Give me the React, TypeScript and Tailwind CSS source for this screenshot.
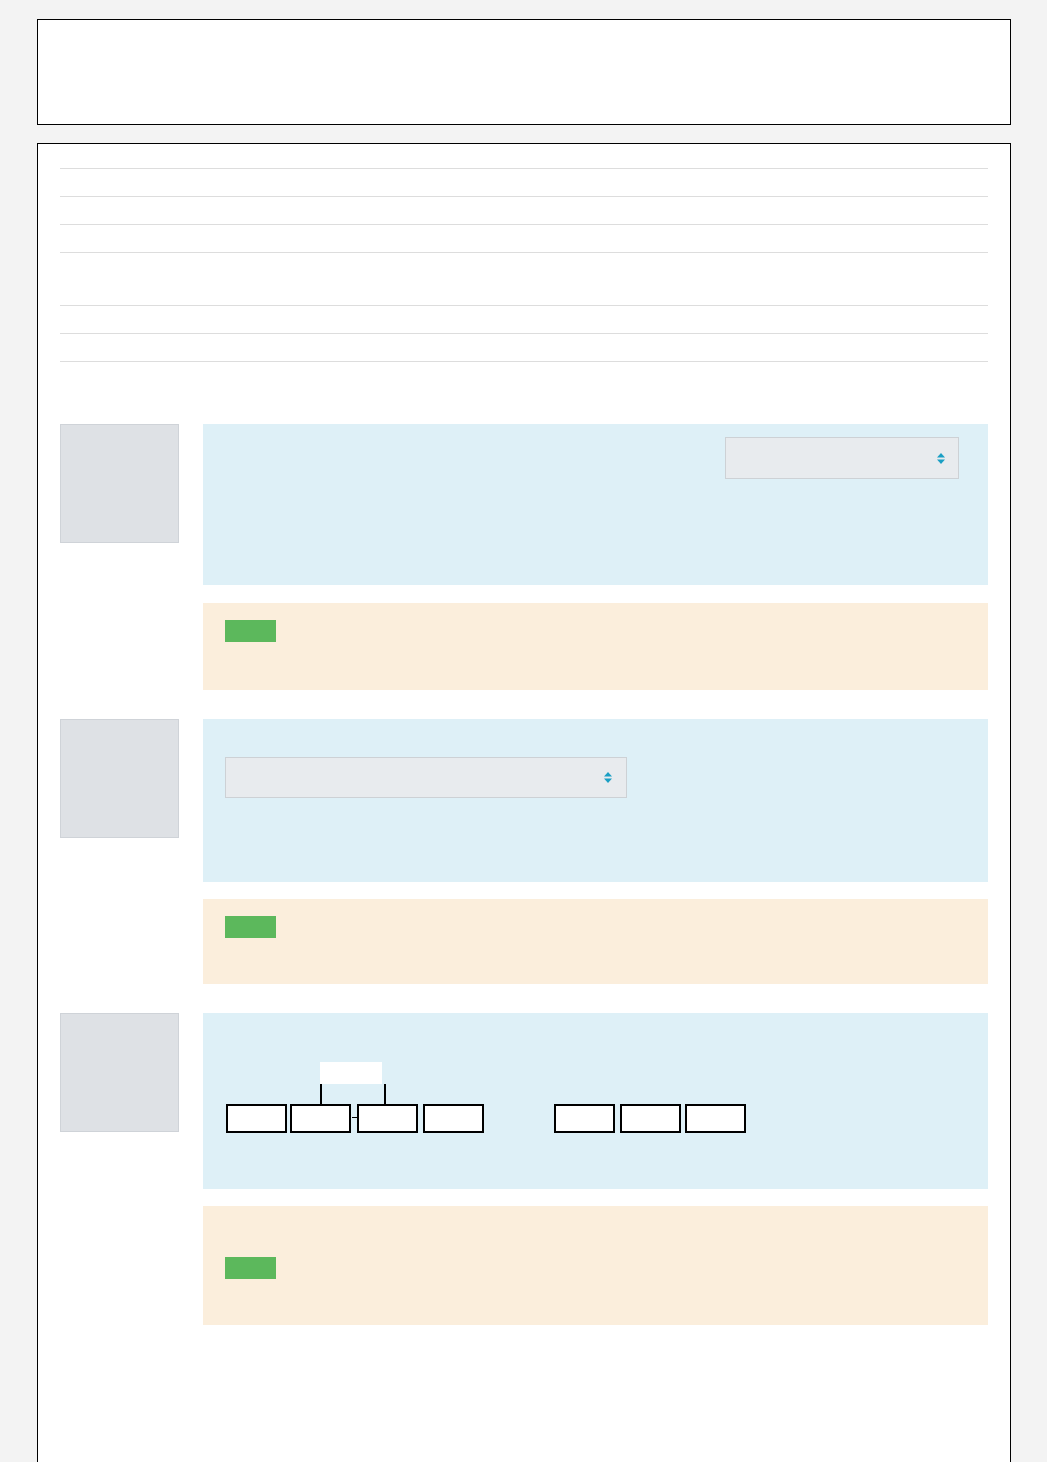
import React from "react";

function SelectArrow() {
  return (
    <svg width="8" height="11" viewBox="0 0 8 11" className="shrink-0">
      <path d="M4 0 L8 4.5 L0 4.5 Z" fill="#1a9fc4" />
      <path d="M4 11 L8 6.5 L0 6.5 Z" fill="#1a9fc4" />
    </svg>
  );
}

function GreyBox() {
  return <div className="w-[119px] h-[119px] bg-[#dee1e5] border border-[#cfd3d8]" />;
}

function Badge() {
  return <div className="w-[51px] h-[22px] bg-[#5cb85c]" />;
}

function OrgBox({ className = "" }: { className?: string }) {
  return <div className={"w-[61px] h-[29px] bg-white border-2 border-black " + className} />;
}

export default function App() {
  return (
    <div className="min-h-[1462px] bg-[#f3f3f3] pt-[19px] font-['Liberation_Sans',sans-serif]">
      <div className="w-[974px] mx-auto">
        <div className="h-[106px] bg-white border border-black" />
        <div className="mt-[18px] bg-white border-t border-l border-r border-black px-[22px] pt-[24px] pb-[140px]">
          <div>
            <div className="h-[28px] border-t border-[#dddddd]" />
            <div className="h-[28px] border-t border-[#dddddd]" />
            <div className="h-[28px] border-t border-[#dddddd]" />
            <div className="h-[53px] border-t border-[#dddddd]" />
            <div className="h-[28px] border-t border-[#dddddd]" />
            <div className="h-[29px] border-t border-b border-[#dddddd]" />
          </div>

          {/* Section 1 */}
          <div className="mt-[62px] flex">
            <div className="w-[143px] shrink-0">
              <GreyBox />
            </div>
            <div className="flex-1 flex flex-col gap-[18px]">
              <div className="h-[161px] bg-[#def0f7] flex justify-end pt-[13px] pr-[29px]">
                <div className="w-[234px] h-[42px] bg-[#e8ebee] border border-[#cdd1d5] flex items-center justify-end pr-[13px]">
                  <SelectArrow />
                </div>
              </div>
              <div className="h-[87px] bg-[#fbeedc] pl-[22px] pt-[17px]">
                <Badge />
              </div>
            </div>
          </div>

          {/* Section 2 */}
          <div className="mt-[29px] flex">
            <div className="w-[143px] shrink-0">
              <GreyBox />
            </div>
            <div className="flex-1 flex flex-col gap-[17px]">
              <div className="h-[163px] bg-[#def0f7] pt-[38px] pl-[22px]">
                <div className="w-[402px] h-[41px] bg-[#e8ebee] border border-[#cdd1d5] flex items-center justify-end pr-[14px]">
                  <SelectArrow />
                </div>
              </div>
              <div className="h-[85px] bg-[#fbeedc] pl-[22px] pt-[17px]">
                <Badge />
              </div>
            </div>
          </div>

          {/* Section 3 */}
          <div className="mt-[29px] flex">
            <div className="w-[143px] shrink-0">
              <GreyBox />
            </div>
            <div className="flex-1 flex flex-col gap-[17px]">
              <div className="h-[176px] bg-[#def0f7] pt-[49px] pl-[23px]">
                <div className="relative h-[84px]">
                  <div className="absolute left-[94px] top-[22px] w-[66px] h-[20px] border-l-2 border-r-2 border-black" />
                  <div className="absolute left-[94px] top-0 w-[62px] h-[22px] bg-white" />
                  <div className="absolute left-[126px] top-[55px] w-[5px] h-px bg-black" />
                  <div className="absolute left-0 top-[42px] flex">
                    <OrgBox />
                    <OrgBox className="ml-[3px]" />
                    <OrgBox className="ml-[6px]" />
                    <OrgBox className="ml-[5px]" />
                    <OrgBox className="ml-[70px]" />
                    <OrgBox className="ml-[5px]" />
                    <OrgBox className="ml-[4px]" />
                  </div>
                </div>
              </div>
              <div className="h-[119px] bg-[#fbeedc] pl-[22px] pt-[51px]">
                <Badge />
              </div>
            </div>
          </div>
        </div>
      </div>
    </div>
  );
}
